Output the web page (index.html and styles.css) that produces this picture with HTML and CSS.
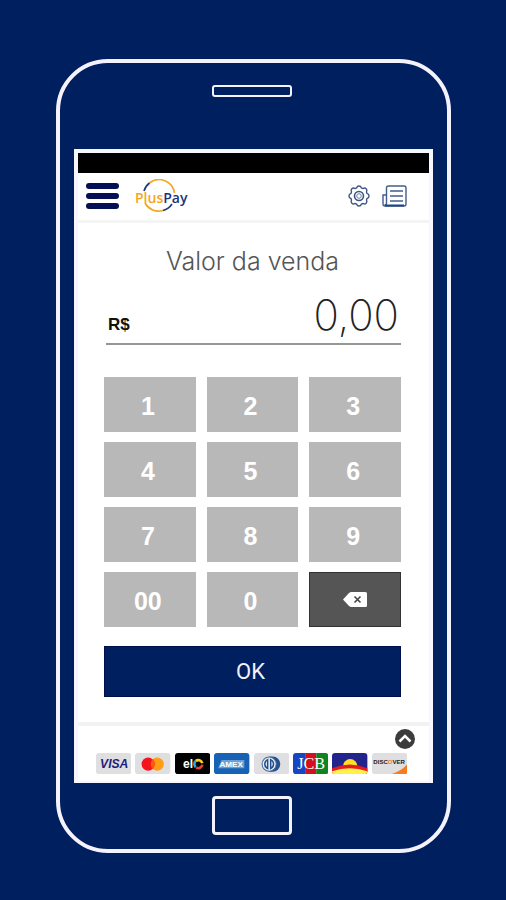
FILE: index.html
```html
<!DOCTYPE html>
<html lang="pt-BR">
<head>
    <meta charset="UTF-8">
    <meta name="viewport" content="width=device-width, initial-scale=1.0">
    <title>PlusPay - Valor da venda</title>
    <link rel="stylesheet" href="styles.css">
</head>
<body>
    <div class="phone">
        <div class="speaker"></div>
        <div class="screen">
            <div class="status-bar"></div>
            <header class="header">
                <button class="icon-btn" aria-label="Menu">
                    <svg width="33" height="26" viewBox="0 0 33 26" fill="#050f55">
                        <rect width="33" height="6" rx="3"/>
                        <rect y="10" width="33" height="6" rx="3"/>
                        <rect y="20" width="33" height="6" rx="3"/>
                    </svg>
                </button>
                <svg class="logo" width="58" height="34" viewBox="0 0 58 34" role="img" aria-label="PlusPay">
                    <g fill="none" stroke-width="1.700">
                        <path d="M15.500 4A15.500 15.500 0 0 1 40.500 14" stroke="#f5a623"/>
                        <path d="M10 12A15.500 15.500 0 0 1 15.500 4" stroke="#233a78"/>
                        <path d="M11 24A15.500 15.500 0 0 0 29 31.500" stroke="#f5a623"/>
                        <path d="M29 31.500A15.500 15.500 0 0 0 38 25" stroke="#233a78"/>
                    </g>
                    <text class="logo-text" x="1" y="24"><tspan fill="#f5a623">Plus</tspan><tspan fill="#1c3474">Pay</tspan></text>
                </svg>
                <button class="icon-btn gear" aria-label="Configurações">
                    <svg width="24" height="24" viewBox="0 0 24 24" fill="none" stroke="#3d5580">
                        <path stroke-width="1.400" stroke-linejoin="round" d="M9.700 3.700A2.400 2.400 0 0 1 14.300 3.700A2.600 2.600 0 0 0 16.200 4.500A2.400 2.400 0 0 1 19.500 7.800A2.600 2.600 0 0 0 20.300 9.700A2.400 2.400 0 0 1 20.300 14.300A2.600 2.600 0 0 0 19.500 16.200A2.400 2.400 0 0 1 16.200 19.500A2.600 2.600 0 0 0 14.300 20.300A2.400 2.400 0 0 1 9.700 20.300A2.600 2.600 0 0 0 7.800 19.500A2.400 2.400 0 0 1 4.500 16.200A2.600 2.600 0 0 0 3.700 14.300A2.400 2.400 0 0 1 3.700 9.700A2.600 2.600 0 0 0 4.500 7.800A2.400 2.400 0 0 1 7.800 4.500A2.600 2.600 0 0 0 9.700 3.700Z"/>
                        <circle cx="12" cy="12" r="4.500" stroke-width="1.600"/>
                        <circle cx="12" cy="12" r="2.300" stroke="#6d82a6"/>
                    </svg>
                </button>
                <button class="icon-btn news" aria-label="Relatórios">
                    <svg width="25" height="22" viewBox="0 0 25 22" fill="none" stroke="#425d8c">
                        <path stroke-width="1.400" d="M4.500 18V3Q4.500 1 6.500 1H22Q24 1 24 3V19Q24 21 22 21H3Q1 21 1 19V10H4.500V18Q4.500 20 2.500 20"/>
                        <path stroke-width="1.500" d="M8 6H21M8 11H21M8 16H21"/>
                        <path stroke="#1d4687" stroke-width="2" d="M3 20.500H22"/>
                    </svg>
                </button>
            </header>

            <main class="sale">
                <h1 class="title"><label for="amount">Valor da venda</label></h1>
                <div class="amount-row">
                    <span class="currency">R$</span>
                    <input class="amount" id="amount" type="text" inputmode="numeric" value="0,00">
                </div>
                <div class="keypad">
                    <button class="key">1</button>
                    <button class="key">2</button>
                    <button class="key">3</button>
                    <button class="key">4</button>
                    <button class="key">5</button>
                    <button class="key">6</button>
                    <button class="key">7</button>
                    <button class="key">8</button>
                    <button class="key">9</button>
                    <button class="key">00</button>
                    <button class="key">0</button>
                    <button class="key key-delete" aria-label="Apagar">
                        <svg width="24" height="15" viewBox="0 0 24 15">
                            <path fill="#fff" d="M0 7.500L6 1Q7 0 8.500 0H22.500Q24 0 24 1.500V13.500Q24 15 22.500 15H8.500Q7 15 6 14Z"/>
                            <path fill="none" stroke="#444" stroke-width="1.600" d="M11.500 4.500L17.500 10.500M17.500 4.500L11.500 10.500"/>
                        </svg>
                    </button>
                </div>
                <button class="ok">OK</button>
            </main>

            <footer class="footer">
                <button class="icon-btn expand" aria-label="Mostrar bandeiras">
                    <svg width="20" height="20" viewBox="0 0 20 20">
                        <circle cx="10" cy="10" r="10" fill="#3c3c3c"/>
                        <path d="M4.500 12.500L10 7L15.500 12.500" fill="none" stroke="#fff" stroke-width="2.500"/>
                    </svg>
                </button>
                <div class="cards">
                    <svg class="card" viewBox="0 0 35 21" role="img" aria-label="Visa">
                        <rect width="35" height="21" rx="3" fill="#dfdfe1"/>
                        <text class="visa" x="18" y="15" text-anchor="middle">VISA</text>
                    </svg>
                    <svg class="card" viewBox="0 0 35 21" role="img" aria-label="Mastercard">
                        <rect width="35" height="21" rx="3" fill="#dfdfe1"/>
                        <circle cx="22" cy="11" r="6.500" fill="#ff9e16"/>
                        <circle cx="13" cy="11" r="6.500" fill="#f5141c"/>
                        <path d="M17.500 6.300a6.500 6.500 0 0 1 0 9.400a6.500 6.500 0 0 1 0-9.400" fill="#ff5a0c"/>
                    </svg>
                    <svg class="card" viewBox="0 0 35 21" role="img" aria-label="Elo">
                        <rect width="35" height="21" rx="3" fill="#000"/>
                        <text class="elo" x="8" y="15">el</text>
                        <g fill="none" stroke-width="2.600">
                            <path d="M20.500 14A4 4 0 0 1 20.500 8" stroke="#29a9e0"/>
                            <path d="M20.500 8A4 4 0 0 1 27 10" stroke="#f7d117"/>
                            <path d="M27 11.500A4 4 0 0 1 21 14.500" stroke="#e8452c"/>
                        </g>
                    </svg>
                    <svg class="card" viewBox="0 0 35 21" role="img" aria-label="American Express">
                        <rect width="35" height="21" rx="3" fill="#1762b4"/>
                        <path d="M4 15L7.500 7H30V15Z" fill="#6b9fd6"/>
                        <text class="amex" x="17" y="14" text-anchor="middle">AMEX</text>
                    </svg>
                    <svg class="card" viewBox="0 0 35 21" role="img" aria-label="Diners Club">
                        <rect width="35" height="21" rx="3" fill="#dfdfe1"/>
                        <path d="M15 3.500H18.500A7.500 7.500 0 0 1 18.500 18.500H15Z" fill="#25508f"/>
                        <circle cx="15" cy="11" r="7" fill="#eef2f7" stroke="#42699d"/>
                        <path d="M13.500 6.500A5 5 0 0 0 13.500 15.500ZM16.500 6.500A5 5 0 0 1 16.500 15.500Z" fill="none" stroke="#25508f" stroke-width="1.500"/>
                    </svg>
                    <svg class="card" viewBox="0 0 35 21" role="img" aria-label="JCB">
                        <path d="M3 0H12V21H3Q0 21 0 18V3Q0 0 3 0Z" fill="#1746c4"/>
                        <path d="M12 0H23V21H12Z" fill="#d4101c"/>
                        <path d="M23 0H32Q35 0 35 3V18Q35 21 32 21H23Z" fill="#0d8420"/>
                        <text class="jcb" x="18" y="16" text-anchor="middle">JCB</text>
                    </svg>
                    <svg class="card" viewBox="0 0 35 21" role="img" aria-label="Sorocred">
                        <rect width="35" height="21" rx="3" fill="#23238c"/>
                        <path d="M11 13A7 7 0 0 1 25 13Z" fill="#ffe022"/>
                        <path d="M0 15Q17.500 8 35 15V18Q35 21 32 21H3Q0 21 0 18Z" fill="#e51b22"/>
                        <path d="M0 18Q17.500 12 35 18Q35 21 32 21H3Q0 21 0 18Z" fill="#fff04a"/>
                    </svg>
                    <svg class="card" viewBox="0 0 35 21" role="img" aria-label="Discover">
                        <rect width="35" height="21" rx="3" fill="#dfdfe1"/>
                        <path d="M35 11V18Q35 21 32 21H19Q29 18 35 11Z" fill="#fa7a1e"/>
                        <text class="discover" x="17" y="11" text-anchor="middle">DISC<tspan fill="#fa7a1e">O</tspan>VER</text>
                    </svg>
                </div>
            </footer>
        </div>
        <div class="home"></div>
    </div>
</body>
</html>
```
FILE: styles.css
```css
* {
    box-sizing: border-box;
}

body {
    margin: 0;
    padding: 59px 55px 47px 56px;
    min-height: 100vh;
    background-color: #001f5f;
    font-family: "Liberation Sans", Arial, sans-serif;
}

button {
    border: 0;
    padding: 0;
    font-family: inherit;
    cursor: pointer;
}

svg {
    display: block;
}

/* phone frame */
.phone {
    display: flex;
    flex-direction: column;
    align-items: center;
    border: 4px solid #f4f2fc;
    border-radius: 52px;
    padding: 22px 14px 14px;
}

.speaker {
    width: 80px;
    height: 12px;
    margin-right: 4px;
    border: 2px solid #f4f2fc;
    border-radius: 3px;
}

.home {
    width: 80px;
    height: 39px;
    margin: 13px 4px 0 0;
    border: 3px solid #f4f2fc;
    border-radius: 4px;
}

.screen {
    align-self: stretch;
    margin-top: 52px;
    border: 4px solid #f7f5fd;
    border-bottom-width: 2px;
    background-color: #fff;
}

.status-bar {
    height: 20px;
    background-color: #000;
}

/* top bar */
.header {
    display: flex;
    align-items: center;
    height: 50px;
    padding: 0 22px 2px 8px;
    border-bottom: 3px solid #f4f4f4;
}

.icon-btn {
    background: none;
}

.logo {
    margin-left: 15px;
}

.logo-text {
    font-family: "Open Sans", sans-serif;
    font-size: 14px;
    font-weight: 600;
}

.gear {
    margin-left: auto;
}

.news {
    margin-left: 11px;
}

/* sale value and keypad */
.sale {
    padding: 20px 28px 25px 26px;
}

.title {
    margin: 0;
    color: #555;
    font-family: Inter, sans-serif;
    font-size: 25px;
    font-weight: 300;
    line-height: 36px;
    text-align: center;
}

.amount-row {
    display: flex;
    align-items: baseline;
    height: 66px;
    margin: 0 0 32px 2px;
    padding-top: 8px;
    border-bottom: 2px solid #949894;
}

.currency {
    padding-left: 2px;
    color: #111;
    font-size: 17px;
    font-weight: 700;
}

.amount {
    flex: 1;
    min-width: 0;
    border: 0;
    padding: 0 2px 0 0;
    background: none;
    color: #222;
    font-family: Inter, sans-serif;
    font-size: 42px;
    font-weight: 200;
    line-height: 56px;
    text-align: right;
}

.keypad {
    display: grid;
    grid-template-columns: repeat(3, 1fr);
    gap: 10px 11px;
}

.key {
    height: 55px;
    padding: 3px 4px 0 0;
    background-color: #b8b8b8;
    color: #fff;
    font-size: 25px;
    font-weight: 700;
}

.key-delete {
    display: flex;
    align-items: center;
    justify-content: center;
    padding: 0;
    border: 1px solid #333;
    background-color: #555;
}

.ok {
    width: 100%;
    height: 51px;
    margin-top: 19px;
    border: 1px solid #00104c;
    padding-right: 4px;
    background-color: #001f5f;
    color: #f0f2f8;
    font-family: Roboto, sans-serif;
    font-size: 22px;
}

/* accepted cards */
.footer {
    padding: 3px 22px 7px 18px;
    border-top: 4px solid #f2f2f2;
}

.expand {
    display: block;
    margin: 0 -8px 4px auto;
}

.cards {
    display: grid;
    grid-template-columns: repeat(8, 1fr);
    gap: 4px;
}

.card {
    width: 100%;
}

.visa {
    fill: #1c1e78;
    font-size: 12px;
    font-style: italic;
    font-weight: 700;
}

.elo {
    fill: #fff;
    font-size: 12px;
    font-weight: 700;
}

.amex {
    fill: #fff;
    font-size: 8px;
    font-weight: 700;
}

.jcb {
    fill: #fff;
    font-family: "Liberation Serif", serif;
    font-size: 16px;
}

.discover {
    fill: #222;
    font-size: 6px;
    font-weight: 700;
}
```
